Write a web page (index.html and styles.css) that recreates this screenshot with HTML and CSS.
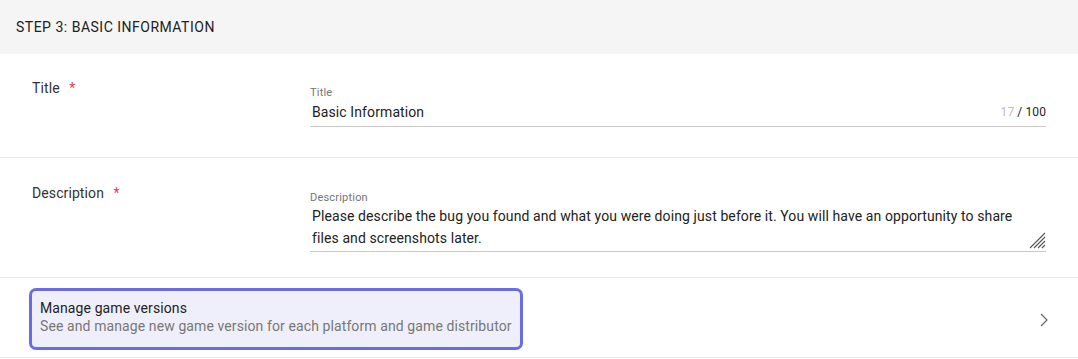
FILE: index.html
```html
<!DOCTYPE html>
<html>
<head>
<meta charset="utf-8">
<link rel="stylesheet" href="styles.css">
</head>
<body>
<div class="panel">
  <div class="header">STEP 3: BASIC INFORMATION</div>
  <div class="row">
    <div class="label">Title <span class="req">*</span></div>
    <div class="field">
      <div class="small">Title</div>
      <div class="input">
        <span class="value">Basic Information</span>
        <span class="counter"><span class="count">17</span> / 100</span>
      </div>
    </div>
  </div>
  <div class="row row-desc">
    <div class="label">Description <span class="req">*</span></div>
    <div class="field">
      <div class="small">Description</div>
      <div class="input textarea">
        <span class="value">Please describe the bug you found and what you were doing just before it. You will have an opportunity to share files and screenshots later.</span>
        <svg class="grip" width="17" height="17" viewBox="0 0 17 17"><path d="M16 1 L1 16 M16 5 L5 16 M16 9 L9 16 M16 13 L13 16" stroke="#555" stroke-width="1.1" fill="none"/></svg>
      </div>
    </div>
  </div>
  <div class="row row-link">
    <div class="linkbox">
      <div class="link-title">Manage game versions</div>
      <div class="link-sub">See and manage new game version for each platform and game distributor</div>
    </div>
    <svg class="chevron" width="8" height="14" viewBox="0 0 8 14"><path d="M1 1 L7 7 L1 13" stroke="#666" stroke-width="1.2" fill="none"/></svg>
  </div>
</div>
</body>
</html>
```
FILE: styles.css
```css
html, body {
  margin: 0;
  padding: 0;
  background: #fff;
}
body {
  font-family: Roboto, "Liberation Sans", sans-serif;
  color: #222;
  font-size: 14px;
  letter-spacing: 0.1px;
}
.panel {
  width: 1078px;
}
.header {
  height: 54px;
  background: #f5f5f5;
  padding-left: 16px;
  display: flex;
  align-items: center;
  font-size: 14px;
  letter-spacing: 0.5px;
  color: #222;
}
.row {
  display: grid;
  grid-template-columns: 278px 1fr;
  padding: 24px 32px 30px 32px;
  border-bottom: 1px solid #e9e9e9;
}
.row-desc {
  padding-top: 25px;
  padding-bottom: 25px;
}
.label {
  line-height: 20px;
  color: #333;
}
.req {
  color: #e0405a;
  margin-left: 6px;
}
.field {
  padding-top: 8px;
}
.small {
  font-size: 11px;
  line-height: 14px;
  color: #757575;
  letter-spacing: 0.2px;
}
.input {
  display: flex;
  align-items: center;
  margin-top: 2px;
  padding: 0 0 4px 2px;
  border-bottom: 1px solid #c8c8c8;
  line-height: 20px;
}
.value {
  flex: 1;
  color: #222;
}
.counter {
  font-size: 12px;
  color: #222;
}
.count {
  color: #bdbdbd;
}
.textarea {
  align-items: flex-end;
  line-height: 22px;
  margin-top: 0;
  padding-bottom: 2px;
}
.grip {
  flex: none;
  margin-left: 6px;
  margin-bottom: 0;
}
.row-link {
  display: flex;
  align-items: center;
  justify-content: space-between;
  padding: 10px 30px 7px 29px;
}
.linkbox {
  background: #efeffb;
  border: 3px solid #6b6be8;
  border-radius: 7px;
  padding: 8px 8px 12px 8px;
  line-height: 18px;
}
.link-title {
  color: #222;
}
.link-sub {
  color: #777;
}
.chevron {
  margin-top: 2px;
}
```
